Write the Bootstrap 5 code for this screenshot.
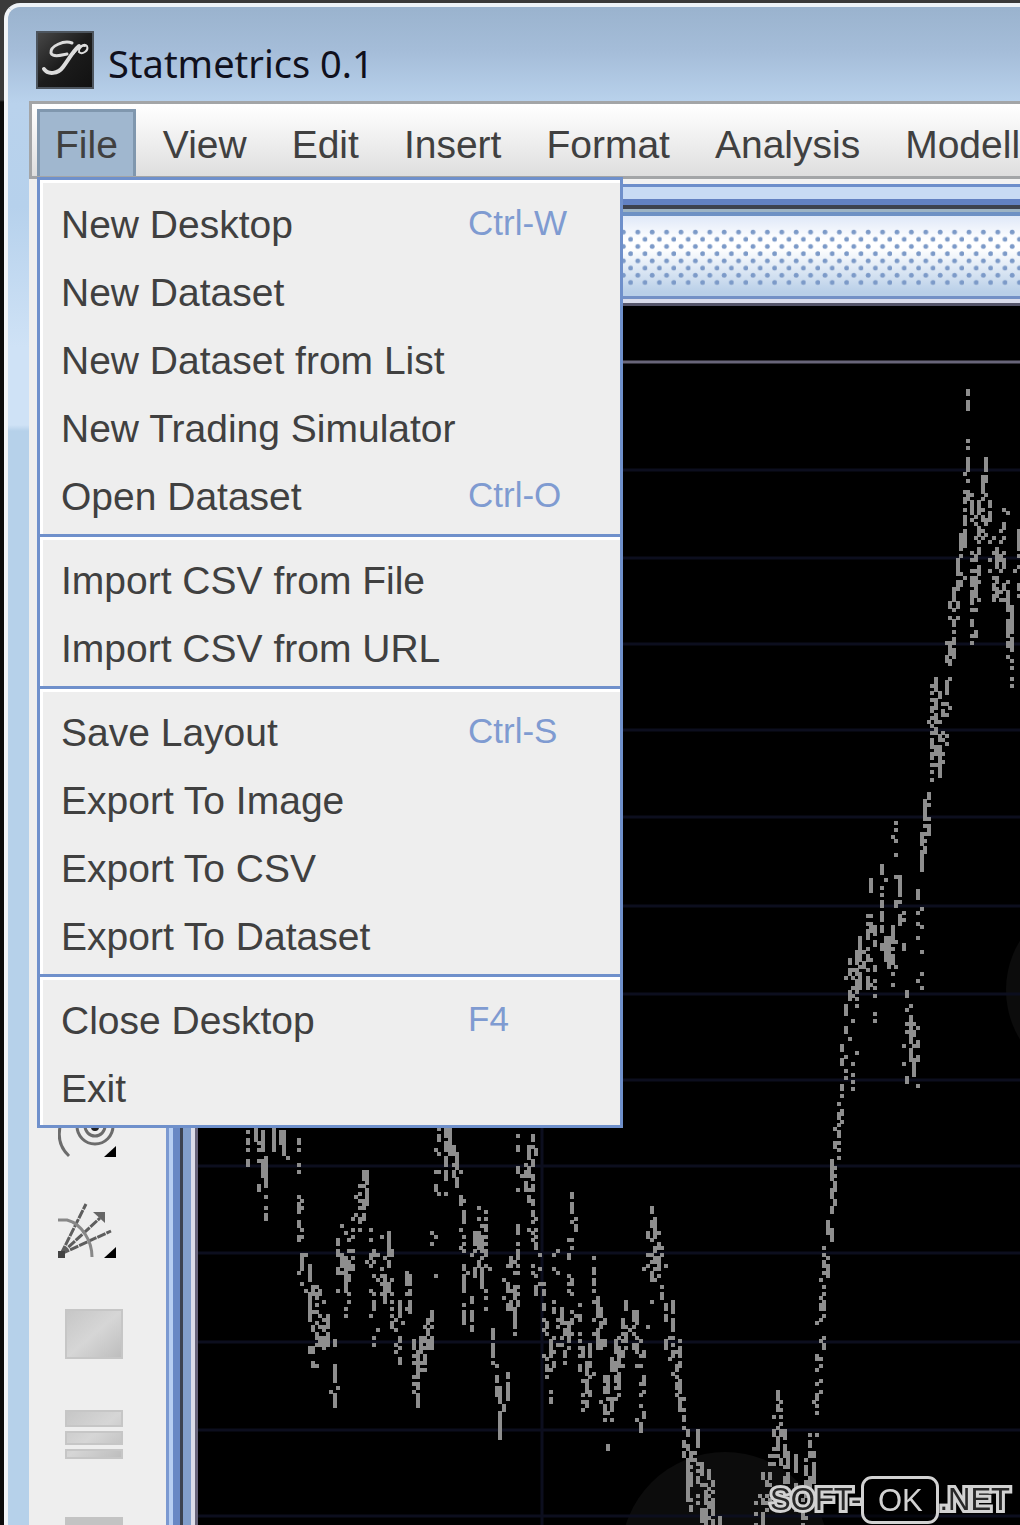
<!DOCTYPE html>
<html lang="en">
<head>
<meta charset="utf-8">
<meta name="viewport" content="width=device-width, initial-scale=1">
<title>Statmetrics 0.1</title>
<link href="https://cdn.jsdelivr.net/npm/bootstrap@5.3.0/dist/css/bootstrap.min.css" rel="stylesheet">
<style>
body { background: #2b2b2b; font-family: "Liberation Sans", Arial, sans-serif; color: #404040; }
.desk { background: linear-gradient(#3a3a3a, #3a3a3a 100px, #0c0c0c 102px); padding: 3px 0 0 4px; }
.app-window { border-top: 4px solid #eef3f8; border-left: 4px solid #f2f5f8; border-top-left-radius: 16px; background: linear-gradient(#9ab3ce, #a5bdd9 45px, #b9d2ec 96px, #b6d1ec 200px, #cfe2f6 340px, #cfe2f6 418px, #b6d1ea 424px); }
.title-bar { height: 94px; padding: 0 0 0 28px; gap: 14px; }
.title-bar svg { margin-top: 14px; }
.title-text { font: 400 38px/48px "Noto Sans", "Open Sans", sans-serif; color: #10101c; margin: 18px 0 0; }
.client { margin-left: 21px; background: #eee; }
.menu-strip { height: 78px; border: solid #a3a5a7; border-width: 3px 0 3px 3px; background: linear-gradient(#fff, #f6f6f6 30%, #dedede); padding: 5px 0 0 5px; gap: 9px; }
.menu-strip .btn { font-size: 39px; line-height: 48px; color: #404040; border: 0; border-radius: 0; padding: 12px 18px 7px; white-space: nowrap; }
.menu-strip .btn.open { background: #a0b7cf; box-shadow: inset 3px 3px #8097ae, inset -3px 0 #8097ae; }
.file-menu { position: absolute; left: 8px; top: 76px; width: 586px; background: #eee; border: 3px solid #6f90cb; border-radius: 0; padding: 11px 0 2px; box-shadow: inset 3px 3px #fff; z-index: 5; }
.file-menu .menu-entry { height: 68px; line-height: 68px; font-size: 39px; padding: 0 0 0 21px; color: #404040; border: 0; background: none; text-align: left; display: flex; width: 100%; white-space: nowrap; }
.file-menu .menu-entry span { flex: 0 0 407px; }
.file-menu kbd { background: none; font: 35px/64px "Liberation Sans", Arial, sans-serif; color: #7f9bd1; padding: 0; }
.file-menu hr { margin: 3px 0 10px; border: 0; height: 3px; background: #6f90cb; opacity: 1; box-shadow: 0 3px #fff; }
.tool-col { flex: 0 0 137px; padding: 901px 0 0 29px; overflow: hidden; }
.tool-col button { height: 101px; flex: none; padding: 0; border: 0; background: none; text-align: left; }
.v-split { flex: 0 0 32px; background: linear-gradient(90deg, #7b99d1 0 3px, #b7cff2 3px 7px, #6888c4 7px 14px, #3c4350 14px 17px, #829fcb 17px 25px, #dcdde9 25px 29px, #68657b 29px 32px); }
.h-split { height: 37px; flex: none; background: linear-gradient(#f2f2f2 0 5px, #6d8ecb 5px 8px, #c8dbf4 8px 20px, #6281c2 20px 26px, #3d424e 26px 30px, #9db3c4 30px 33px, #6e91c4 33px 37px); }
.grip-wrap { border-bottom: 4px solid #d8dbea; flex: none; background: linear-gradient(#dfe8f8, #fff 24px, #fff 32px, #b9cfe8 76px); }
.grip-wrap svg { border-bottom: 3px solid #7390c6; display: block; }
.plot { background: #000; border-top: 3px solid #55556a; min-height: 0; }
.brand { position: fixed; right: 10px; bottom: 1px; z-index: 6; color: #282828; font-size: 31px; line-height: 48px; }
.brand .rim { -webkit-text-stroke: 6px #d2d2d2; paint-order: stroke fill; }
.brand .pill { border: 3px solid #d2d2d2; border-radius: 11px; width: 78px; height: 48px; line-height: 44px; text-align: center; color: #d2d2d2; background: #0008; }
</style>
</head>
<body>
<div class="desk vh-100 overflow-hidden">
  <div class="app-window h-100 d-flex flex-column overflow-hidden">
    <header class="title-bar d-flex align-items-start flex-shrink-0">
      <svg class="mt-4" width="58" height="58" viewBox="0 0 58 58" aria-hidden="true">
        <defs><linearGradient id="lg" x1="0" y1="0" x2="1" y2="1"><stop offset="0" stop-color="#484848"/><stop offset=".5" stop-color="#1c1c1c"/><stop offset="1" stop-color="#111"/></linearGradient></defs>
        <rect x="1" y="1" width="56" height="56" fill="url(#lg)" stroke="#4d555e" stroke-width="2"/>
        <g fill="none" stroke="#dcdcdc" stroke-linecap="round"><path stroke-width="3" d="M36 12C28 9 14 15 15 22C17 27 26 24 31 23"/><path stroke-width="4" d="M43 15C37 20 33 28 27 36C22 43 12 44 8 38"/><path stroke-width="2" d="M37 23C42 17 48 11 51 15C53 20 46 24 43 21C42 18 46 14 49 15"/></g>
      </svg>
      <h1 class="title-text align-self-center">Statmetrics 0.1</h1>
    </header>
    <main class="client position-relative d-flex flex-column flex-grow-1 overflow-hidden">
      <nav class="menu-strip d-flex flex-shrink-0 overflow-hidden" aria-label="Main menu">
        <button class="btn open" type="button" aria-expanded="true">File</button>
        <button class="btn" type="button">View</button>
        <button class="btn" type="button">Edit</button>
        <button class="btn" type="button">Insert</button>
        <button class="btn" type="button">Format</button>
        <button class="btn" type="button">Analysis</button>
        <button class="btn pe-0" type="button">Modell</button>
      </nav>
      <div class="file-menu" role="menu" aria-label="File">
        <button class="menu-entry" type="button"><span>New Desktop</span><kbd>Ctrl-W</kbd></button>
        <button class="menu-entry" type="button">New Dataset</button>
        <button class="menu-entry" type="button">New Dataset from List</button>
        <button class="menu-entry" type="button">New Trading Simulator</button>
        <button class="menu-entry" type="button"><span>Open Dataset</span><kbd>Ctrl-O</kbd></button>
        <hr>
        <button class="menu-entry" type="button">Import CSV from File</button>
        <button class="menu-entry" type="button">Import CSV from URL</button>
        <hr>
        <button class="menu-entry" type="button"><span>Save Layout</span><kbd>Ctrl-S</kbd></button>
        <button class="menu-entry" type="button">Export To Image</button>
        <button class="menu-entry" type="button">Export To CSV</button>
        <button class="menu-entry" type="button">Export To Dataset</button>
        <hr>
        <button class="menu-entry" type="button"><span>Close Desktop</span><kbd>F4</kbd></button>
        <button class="menu-entry" type="button">Exit</button>
      </div>
      <div class="d-flex flex-grow-1 overflow-hidden">
        <aside class="tool-col d-flex flex-column">
          <button type="button" aria-label="Spiral"><svg width="70" height="70" viewBox="0 -8 70 70"><g fill="none" stroke="#6c6c6c" stroke-width="3"><path d="M4 16Q-4 38 11 52"/><circle cx="37" cy="22" r="18"/><circle cx="37" cy="22" r="10"/></g><circle cx="37" cy="23" r="4" fill="#222"/><path d="M58 42V53H46Z"/></svg></button>
          <button type="button" aria-label="Fan"><svg width="70" height="70" viewBox="0 -8 70 70"><g fill="none" stroke="#5e5e5e" stroke-width="3"><path d="M3 49L28 -1M3 49L42 13M3 49L53 26" stroke-dasharray="9 1"/><path d="M0 15H9C24 19 34 36 34 52" stroke="#888"/></g><path d="M35 7H47V18Z" fill="#666"/><path d="M0 46h7v7h-7z" fill="#444"/><path d="M58 42V53H46Z"/></svg></button>
          <button type="button" aria-label="Filled area"><svg width="70" height="70" viewBox="0 0 70 70"><defs><linearGradient id="gr" x2="1" y2="1"><stop stop-color="#c6c6c6"/><stop offset=".5" stop-color="#d6d6d6"/><stop offset="1" stop-color="#bdbdbd"/></linearGradient></defs><rect x="8" y="12" width="56" height="48" fill="url(#gr)" stroke="#c6c6c6" stroke-width="2"/></svg></button>
          <button type="button" aria-label="Bands"><svg width="70" height="70" viewBox="0 0 70 70"><g fill="url(#gr)" stroke="#c6c6c6" stroke-width="2"><path d="M8 12h56v15h-56zM8 33h56v12h-56zM8 51h56v8h-56z"/></g></svg></button>
          <button type="button" aria-label="Block"><svg width="70" height="70" viewBox="0 0 70 70"><rect x="7" y="17" width="58" height="40" fill="#c3c3c3"/></svg></button>
        </aside>
        <div class="d-flex flex-column flex-grow-1 overflow-hidden">
          <div class="h-split"></div>
          <div class="grip-wrap">
            <svg width="100%" height="83" aria-hidden="true">
              <defs><pattern id="dots" width="14.4" height="14.4" patternUnits="userSpaceOnUse" x="6" y="12"><circle cx="5" cy="4" r="2.4" fill="#7c9ac8"/><circle cx="12.2" cy="11.2" r="2.4" fill="#7c9ac8"/></pattern></defs>
              <rect y="12" width="100%" height="58" fill="url(#dots)"/>
            </svg>
          </div>
          <div class="d-flex flex-grow-1 overflow-hidden">
            <div class="v-split"></div>
            <div class="plot flex-grow-1">
              <svg id="chart" class="d-block" width="100%" height="100%" viewBox="198 306 822 1219" preserveAspectRatio="xMinYMin slice" role="img" aria-label="Price chart">
                <circle cx="725" cy="1556" r="104" fill="#0c0c0c"/>
                <circle cx="1100" cy="990" r="94" fill="#0c0c0c"/>
                <path d="M198 362H1020" stroke="#686579" stroke-width="3"/>
                <path id="grid" stroke="#0c0e1e" stroke-width="3" d="M542 364V1525"/>
                <path id="ticks" fill="#8e8e8e"/>
              </svg>
            </div>
          </div>
        </div>
      </div>
    </main>
  </div>
</div>
<div class="brand d-flex align-items-center"><span class="rim">SOFT-</span><span class="pill">OK</span><span class="rim">.NET</span></div>
<script src="https://cdn.jsdelivr.net/npm/bootstrap@5.3.0/dist/js/bootstrap.bundle.min.js"></script>
<script>
// Horizontal grid levels
const grid = document.getElementById('grid');
grid.setAttribute('d', grid.getAttribute('d') + [470,558,644,730,817,906,994,1080,1166,1253,1342,1430,1516].map(y => `M198 ${y}H1020`).join(''));
// Quotes per column: x, top, bottom, fill percentage
const quotes = `247 1132 1165 80,254 1128 1140 99,258 1135 1190 60,262 1128 1178 70,267 1155 1218 70,272 1128 1150 99,280 1132 1148 80,283 1140 1172 95,286 1128 1140 80,297 1136 1172 40,297 1195 1240 60,301 1200 1270 60,304 1250 1290 80,308 1265 1320 80,312 1280 1312 80,312 1325 1368 50,316 1285 1365 70,320 1270 1345 60,324 1295 1350 80,328 1315 1350 99,333 1365 1405 99,336 1335 1380 40,337 1240 1310 40,341 1212 1265 60,345 1255 1315 70,349 1250 1300 70,352 1215 1270 50,355 1160 1200 50,359 1185 1228 85,363 1158 1220 70,367 1170 1205 80,369 1228 1300 35,373 1300 1350 70,376 1250 1310 60,380 1228 1310 50,384 1275 1300 95,388 1232 1290 80,392 1240 1285 60,394 1290 1330 70,398 1300 1345 70,401 1310 1365 50,405 1260 1315 60,409 1275 1315 85,413 1340 1385 80,416 1350 1405 90,420 1325 1370 60,424 1325 1370 70,427 1315 1355 90,431 1312 1350 80,434 1165 1300 27,438 1128 1180 45,445 1128 1195 65,449 1128 1155 95,453 1140 1175 80,457 1150 1185 90,459 1185 1250 40,463 1200 1290 50,466 1270 1325 60,470 1295 1330 90,474 1210 1275 60,478 1205 1270 80,482 1225 1290 60,486 1210 1320 60,492 1330 1365 99,495 1365 1395 80,499 1385 1437 80,502 1390 1445 70,506 1370 1400 80,506 1255 1310 50,510 1255 1310 70,514 1285 1333 95,517 1225 1300 50,520 1133 1190 70,524 1160 1195 70,528 1145 1200 80,532 1133 1195 70,534 1200 1250 80,538 1210 1300 60,542 1280 1340 60,546 1320 1370 70,549 1340 1402 60,553 1300 1365 50,556 1218 1300 38,560 1300 1350 70,564 1315 1365 80,568 1320 1350 90,571 1193 1260 60,567 1235 1300 35,574 1270 1335 50,578 1300 1370 50,582 1345 1410 55,586 1360 1410 70,590 1340 1410 60,593 1255 1300 65,597 1295 1350 90,601 1305 1350 90,604 1315 1345 70,604 1375 1420 80,608 1370 1448 60,612 1360 1410 60,616 1340 1400 60,620 1345 1395 60,624 1320 1365 60,628 1297 1345 70,632 1305 1350 90,636 1310 1370 60,640 1380 1435 70,644 1350 1400 50,647 1240 1325 35,651 1198 1280 60,655 1215 1280 88,659 1230 1280 70,663 1245 1300 55,666 1300 1360 60,670 1335 1388 70,673 1300 1345 70,677 1340 1405 75,681 1340 1410 80,685 1375 1460 60,689 1430 1500 70,692 1450 1510 65,697 1428 1480 95,701 1460 1520 50,705 1490 1525 80,709 1460 1525 70,713 1480 1525 80,720 1515 1525 80,755 1500 1525 50,762 1470 1525 60,766 1475 1510 70,770 1450 1500 70,774 1430 1465 60,778 1385 1460 70,782 1400 1440 60,786 1430 1480 85,790 1450 1480 99,794 1455 1510 65,801 1490 1525 60,805 1470 1520 70,809 1430 1500 90,813 1450 1480 80,816 1355 1440 65,820 1295 1370 70,824 1245 1310 80,828 1215 1275 75,832 1165 1240 80,836 1140 1190 80,840 1100 1150 80,844 1085 1115 80,845 1000 1080 48,848 953 1000 60,852 970 1095 40,856 945 1010 65,859 940 985 80,862 935 990 60,866 915 990 60,870 880 900 80,870 915 960 60,874 925 950 90,874 1000 1025 50,876 960 1000 80,881 862 905 80,881 910 950 50,884 935 960 90,888 935 975 75,892 925 985 80,895 820 862 60,895 875 950 40,899 875 925 80,903 880 985 40,906 990 1085 50,910 1015 1060 99,914 1020 1075 75,917 890 1090 30,921 830 870 90,925 800 850 95,928 785 835 85,932 680 780 70,936 675 770 75,940 735 775 90,943 700 765 70,946 640 720 50,950 600 680 60,954 585 660 60,957 560 620 70,961 530 590 75,964 485 545 75,967 388 422 90,967 440 500 50,971 490 520 80,971 545 645 45,975 550 640 45,978 500 580 70,982 470 540 85,986 452 545 60,990 500 570 60,993 550 610 60,997 540 600 70,1000 530 600 70,1004 490 610 50,1008 590 645 70,1010 600 685 60,1013 600 650 80,1018 530 600 80`;
let seed = 7;
const rnd = () => (seed = seed * 16807 % 2147483647) / 2147483647;
let d = '';
for (const q of quotes.split(',')) {
  const [x, top, bottom, fill] = q.split(' ').map(Number);
  const cell = Math.round(x / 3.6);
  for (let row = Math.round(top / 3.6); row * 3.6 < bottom; row++) {
    if (rnd() * 112 >= fill) continue;
    const edge = row * 3.6 - top < 14 || bottom - row * 3.6 < 14;
    const drift = !edge && rnd() < 0.3 ? (rnd() < 0.5 ? -1 : 1) : 0;
    d += `M${Math.round((cell + drift) * 3.6) - 2} ${Math.round(row * 3.6)}h4v4h-4z`;
  }
}
document.getElementById('ticks').setAttribute('d', d);
</script>
</body>
</html>
